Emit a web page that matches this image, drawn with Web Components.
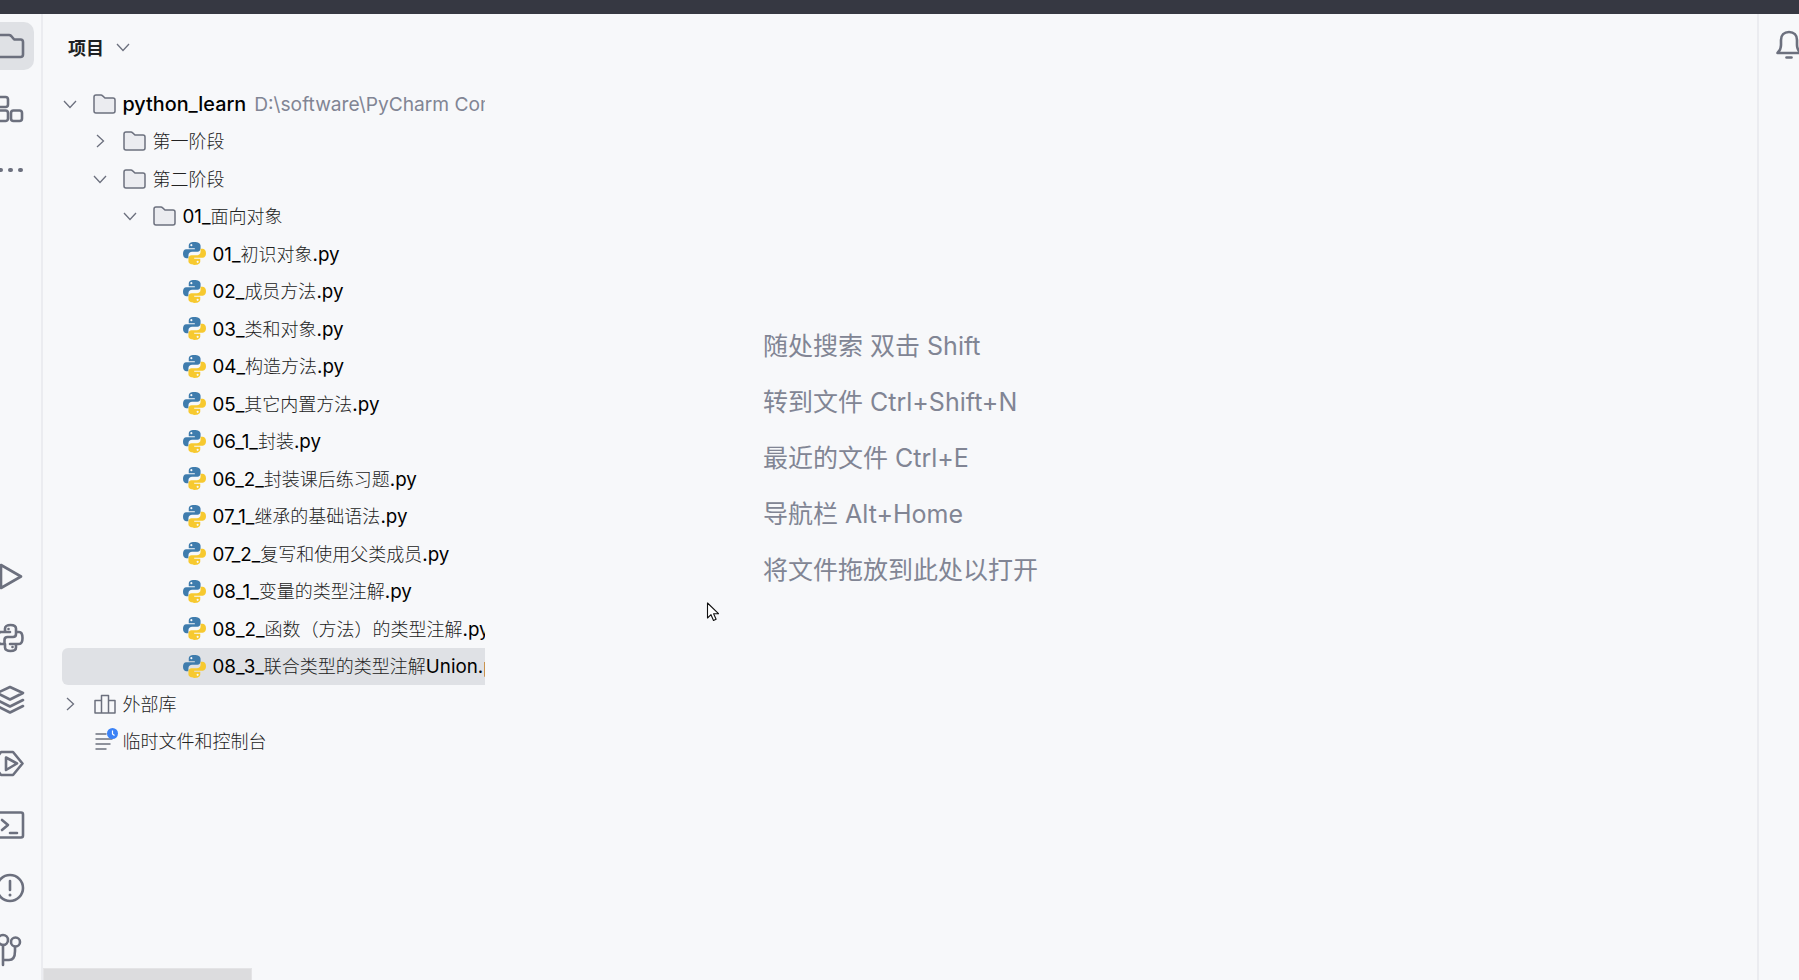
<!DOCTYPE html>
<html lang="zh"><head><meta charset="utf-8"><style>
html,body{margin:0;height:100%;overflow:hidden;background:#f7f8fa}
body{font-family:Inter,"Noto Sans CJK SC",sans-serif}
</style></head><body>
<ide-window></ide-window>
<script>
const S='fill="none" stroke="#6c707e" stroke-width="2.600" stroke-linecap="round" stroke-linejoin="round"';
const railIcons={
 folder:`<path d="M-6 8H9c1 0 1.600.4 2.200 1l3 3.500h6.300c1.400 0 2.500 1 2.500 2.500v12.500c0 1.400-1.100 2.500-2.500 2.500H-6" ${S}/>`,
 struct:`<path d="M-6 7H5.500A2.500 2.500 0 0 1 8 9.500v5A2.500 2.500 0 0 1 5.500 17H-6M-6 20.500H5.500A2.500 2.500 0 0 1 8 23v5.500A2.500 2.500 0 0 1 5.500 31H-6" ${S}/><rect x="11" y="20.500" width="11" height="10.500" rx="2.500" ${S}/>`,
 run:`<path d="M1 8 21 19.500 1 31Z" ${S}/>`,
 py:`<path d="M5 13V9.500C5 7.500 7 6 10.500 6S16 7.500 16 9.500V15c0 2-1 3-3 3H7.500c-2 0-3 1-3 3v3.500M10 13H1c-2 0-3 2-3 6s1 6 3 6h3.500M16 13h3c2 0 3.500 2 3.500 6s-1.500 6-3.500 6h-9M16 25v3.500c0 2-2 3.500-5.500 3.500S5 30.500 5 28.500V25" ${S}/><circle cx="8.500" cy="10" r="1.300" fill="#6c707e"/><circle cx="12.500" cy="28" r="1.300" fill="#6c707e"/>`,
 layers:`<path d="M-3 12 10 6l13 6-13 6.500ZM-3 19l13 6.500L23 19M-3 25l13 6.500L23 25" ${S}/>`,
 service:`<path d="M1 8h12l9.500 11.500L13 31H1L-8 19.500Z" ${S}/><path d="M6 13.500l11 6-11 6.500Z" ${S}/>`,
 term:`<path d="M-4 6.500h25a2 2 0 0 1 2 2v21a2 2 0 0 1-2 2H-4" ${S}/><path d="M2 14l6 5-6 5M10 27h7" ${S}/>`,
 warn:`<circle cx="10" cy="19" r="13" ${S}/><path d="M10 12v9" ${S}/><circle cx="10" cy="26" r="1.500" fill="#6c707e"/>`,
 git:`<circle cx="3" cy="9" r="5" ${S}/><circle cx="15.500" cy="11" r="4.500" ${S}/><path d="M3 14v20M3 29h6c4 0 6-3 6-9v-4" ${S}/>`,
};
const pyIcon=`<svg width="23" height="23" viewBox="0 0 22 22"><path d="M10.800 0C7 0 5.500 1.500 5.500 3.500V6h5.800v1H3.200C1 7 0 9 0 11.200S1 15.500 3 15.500h2.200v-2.800c0-2 1.600-3.400 3.500-3.400h5.200c1.700 0 2.900-1.300 2.900-3V3.500C16.800 1.500 14.500 0 10.800 0Z" fill="#3f7cad"/><circle cx="8" cy="3" r="1" fill="#f7f8fa"/><path d="M11.200 22c3.800 0 5.300-1.500 5.300-3.500V16h-5.800v-1h8.100c2.200 0 3.200-2 3.200-4.200S21 6.500 19 6.500h-2.200v2.800c0 2-1.600 3.400-3.500 3.400H8.100c-1.700 0-2.900 1.300-2.900 3v2.800C5.200 20.500 7.500 22 11.200 22Z" fill="#f7c92f"/><circle cx="14" cy="19" r="1" fill="#f7f8fa"/></svg>`;
const folderIcon=`<svg width="23" height="20" viewBox="0 0 23 20"><path d="M1 3c0-1.100.9-2 2-2h5c.6 0 1 .2 1.400.6L12 4h8c1.100 0 2 .9 2 2v11c0 1.100-.9 2-2 2H3c-1.100 0-2-.9-2-2Z" fill="#ebecf0" stroke="#6c707e" stroke-width="1.500"/></svg>`;
const chev={down:`<svg width="14" height="14" viewBox="0 0 14 14"><path d="M1 4l6 6.500 6-6.500" fill="none" stroke="#6c707e" stroke-width="1.300"/></svg>`,right:`<svg width="14" height="14" viewBox="0 0 14 14"><path d="M4 1l6.500 6-6.500 6" fill="none" stroke="#6c707e" stroke-width="1.300"/></svg>`};
const libIcon=`<svg width="22" height="20" viewBox="0 0 22 20"><path d="M1 6.500h6.500V19H1ZM7.500 1.500h7V19h-7ZM14.500 6.500H21V19h-6.500Z" fill="none" stroke="#6c707e" stroke-width="1.500" stroke-linejoin="round"/></svg>`;
const scratchIcon=`<svg width="24" height="22" viewBox="0 0 24 22" style="overflow:visible"><path d="M2.500 4h11M2.500 9h17M2.500 14h15M2.500 19h11" fill="none" stroke="#6c707e" stroke-width="1.500"/><circle cx="19.500" cy="3.500" r="5.500" fill="#3b82f6"/><path d="M19.500 .5V4l2 1.500" fill="none" stroke="#fff" stroke-width="1.200"/></svg>`;
const fmt=s=>s.replace(/[\u3000-\u9fff\uff00-\uffef]+/g,m=>`<span class="z">${m}</span>`);

class Base extends HTMLElement{
  render(html){this.attachShadow({mode:'open'}).innerHTML=html}
}
class RailIcon extends Base{connectedCallback(){
  const n=this.getAttribute('name');
  this.render(`<style>:host{display:block;width:30px;height:38px}svg{display:block;overflow:visible}</style><svg width="30" height="38" viewBox="0 0 30 38">${railIcons[n]}</svg>`)
}}
customElements.define('rail-icon',RailIcon);

class ToolRail extends Base{connectedCallback(){
  this.render(`<style>
  :host{display:flex;flex-direction:column;width:41px;border-right:2px solid #ebecf0;flex:none;position:relative}
  .top{display:flex;flex-direction:column;padding-top:8px}
  .sel{width:34px;height:48px;background:#dfe1e5;border-radius:0 10px 10px 0;display:flex;align-items:center}
  .dots{display:flex;height:10px;align-items:center;margin-top:37px}
  .dots i{width:4.500px;height:4.500px;border-radius:50%;background:#6c707e;display:block;margin-left:5.500px}
  .dots i:first-child{margin-left:-2px}
  .bottom{margin-top:auto;display:flex;flex-direction:column;gap:24.400px;padding-bottom:11px}
  </style>
  <div class="top">
    <div class="sel"><rail-icon name="folder"></rail-icon></div>
    <rail-icon name="struct" style="margin-top:20px"></rail-icon>
    <div class="dots"><i></i><i></i><i></i></div>
  </div>
  <div class="bottom">
    <rail-icon name="run"></rail-icon><rail-icon name="py"></rail-icon><rail-icon name="layers"></rail-icon>
    <rail-icon name="service"></rail-icon><rail-icon name="term"></rail-icon><rail-icon name="warn"></rail-icon><rail-icon name="git"></rail-icon>
  </div>`)
}}
customElements.define('tool-rail',ToolRail);

class TreeRow extends Base{connectedCallback(){
  const level=+this.getAttribute('level')||0,kind=this.getAttribute('kind'),exp=this.getAttribute('exp'),sel=this.hasAttribute('selected');
  const icon={folder:folderIcon,py:pyIcon,lib:libIcon,scratch:scratchIcon}[kind];
  this.render(`<style>
  :host{display:block;height:37.500px}
  .r{height:37.500px;display:flex;align-items:center;box-sizing:border-box;padding-left:${1+level*30}px;white-space:nowrap;overflow:hidden;border-radius:6px 0 0 6px;${sel?'background:#dfe1e5;':''}}
  .c{width:14px;height:14px;flex:none;margin-right:16px;display:flex}
  .i{width:23px;flex:none;margin-right:6.500px;display:flex;align-items:center;justify-content:center}
  .t{font-size:18.800px;color:#000;flex:none;line-height:1;padding-top:3px}
  </style><div class="r"><span class="c">${exp?chev[exp]:''}</span><span class="i">${icon}</span><span class="t"><slot></slot></span></div>`)
}}
customElements.define('tree-row',TreeRow);

class ProjectPane extends Base{connectedCallback(){
  this.render(`<style>
  :host{display:flex;flex-direction:column;width:423px;flex:none;margin-left:19px;overflow:hidden}
  .hd{height:56px;display:flex;align-items:center;padding-left:6px;gap:12px;font-size:18px;font-weight:600;color:#1e1f22;flex:none;margin-top:5px;padding-bottom:3px}
  .tree{margin-top:7px;width:423px}
  </style>
  <div class="hd"><span>项目</span>${chev.down}</div>
  <div class="tree"><slot></slot></div>`)
}}
customElements.define('project-pane',ProjectPane);

class HintList extends Base{connectedCallback(){
  this.render(`<style>
  :host{position:absolute;left:763px;top:317.500px;display:flex;flex-direction:column;font-size:25px;color:#818594;line-height:56.100px;white-space:nowrap}
  </style><slot></slot>`)
}}
customElements.define('hint-list',HintList);

class IdeWindow extends Base{connectedCallback(){
  const files=["01_初识对象.py","02_成员方法.py","03_类和对象.py","04_构造方法.py","05_其它内置方法.py","06_1_封装.py","06_2_封装课后练习题.py","07_1_继承的基础语法.py","07_2_复写和使用父类成员.py","08_1_变量的类型注解.py","08_2_函数（方法）的类型注解.py"];
  this.render(`<style>
  :host{display:flex;flex-direction:column;width:1799px;height:980px;position:relative;overflow:hidden;background:#f7f8fa}
  .bar{height:14px;background:#363842;flex:none}
  .main{flex:1;display:flex;min-height:0;position:relative}
  .right{margin-left:auto;width:40px;border-left:2px solid #ebecf0;flex:none;padding-top:11px}
  .right svg{display:block;margin-left:15px;overflow:visible}
  .thumb{position:absolute;left:43px;bottom:0;width:209px;height:12px;background:#dcdcde;border:1.500px solid #e4e4e6;border-bottom:0;box-sizing:border-box}
  .cursor{position:absolute;left:706px;top:602px}
  .z{font-size:18px;font-weight:300;color:#222}
  .g{color:#818594;font-weight:400;margin-left:8px;font-size:19.200px}
  .ch{font-weight:500;font-size:19.800px}
  </style>
  <div class="bar"></div>
  <div class="main">
    <tool-rail></tool-rail>
    <project-pane>
      <tree-row level="0" kind="folder" exp="down"><span class="ch">python_learn</span><span class="g">D:\\software\\PyCharm Community</span></tree-row>
      <tree-row level="1" kind="folder" exp="right">${fmt('第一阶段')}</tree-row>
      <tree-row level="1" kind="folder" exp="down">${fmt('第二阶段')}</tree-row>
      <tree-row level="2" kind="folder" exp="down">${fmt('01_面向对象')}</tree-row>
      ${files.map(f=>`<tree-row level="3" kind="py">${fmt(f)}</tree-row>`).join('')}
      <tree-row level="3" kind="py" selected>${fmt('08_3_联合类型的类型注解Union.py')}</tree-row>
      <tree-row level="0" kind="lib" exp="right">${fmt('外部库')}</tree-row>
      <tree-row level="0" kind="scratch">${fmt('临时文件和控制台')}</tree-row>
    </project-pane>
    <div class="right"><svg width="30" height="38" viewBox="0 0 30 38"><path d="M3.500 28c2-2 3.500-4 3.500-8v-5c0-5 3-8 8-8s8 3 8 8v5c0 4 1.500 6 3.500 8Z" ${S}/><path d="M12.500 32.500h5" ${S}/></svg></div>
  </div>
  <hint-list>
    <div>随处搜索 双击 Shift</div>
    <div>转到文件 Ctrl+Shift+N</div>
    <div>最近的文件 Ctrl+E</div>
    <div>导航栏 Alt+Home</div>
    <div>将文件拖放到此处以打开</div>
  </hint-list>
  <div class="thumb"></div>
  <svg class="cursor" width="14" height="20" viewBox="0 0 14 20"><path d="M1.500 1v15l3.500-3.300 2.500 5.800 2.600-1.200-2.500-5.600H12.500Z" fill="#fff" stroke="#111" stroke-width="1.100" stroke-linejoin="round"/></svg>`)
}}
customElements.define('ide-window',IdeWindow);
</script>
</body></html>
